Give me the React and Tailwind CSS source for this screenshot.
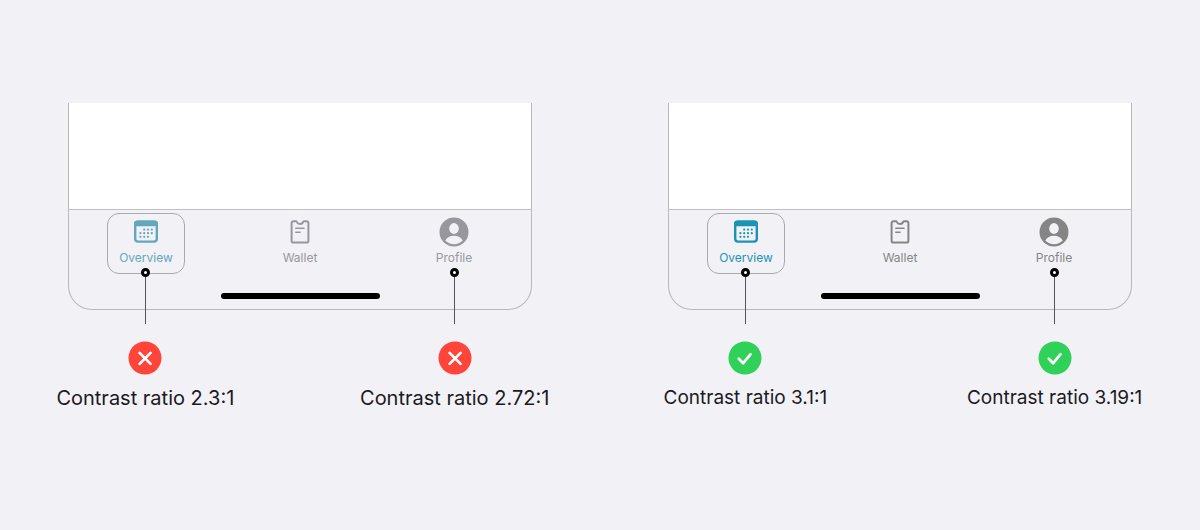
import clsx from 'clsx';

const CalendarIcon = () => (
  <svg width="24" height="24" viewBox="0 0 24 24" fill="none" aria-hidden="true">
    <rect x="1.2" y="1.600" width="21.600" height="20" rx="2.800" stroke="currentColor" strokeWidth="2.400" />
    <path d="M0 6.300V3.600A3.300 3.300 0 0 1 3.300.400h17.400A3.300 3.300 0 0 1 24 3.600v2.700z" fill="currentColor" />
    <g fill="currentColor">
      <circle cx="10.200" cy="9.600" r="1.100" />
      <circle cx="14" cy="9.600" r="1.100" />
      <circle cx="17.800" cy="9.600" r="1.100" />
      <circle cx="6.400" cy="13.200" r="1.100" />
      <circle cx="10.200" cy="13.200" r="1.100" />
      <circle cx="14" cy="13.200" r="1.100" />
      <circle cx="17.800" cy="13.200" r="1.100" />
      <circle cx="6.400" cy="16.800" r="1.100" />
      <circle cx="10.200" cy="16.800" r="1.100" />
      <circle cx="14" cy="16.800" r="1.100" />
    </g>
  </svg>
);

const WalletIcon = () => (
  <svg width="20" height="24" viewBox="0 0 20 24" fill="none" stroke="currentColor" aria-hidden="true">
    <path
      d="M3.500 1.200h2.300c.5 0 .8.300 1 .800.500 1.200 1.700 1.900 3.200 1.900s2.700-.700 3.200-1.900c.2-.5.500-.8 1-.8h2.300a1.900 1.900 0 0 1 1.900 1.900v17.600a1.900 1.900 0 0 1-1.900 1.900h-13a1.900 1.900 0 0 1-1.900-1.900V3.100a1.900 1.900 0 0 1 1.900-1.900z"
      strokeWidth="2"
      strokeLinejoin="round"
    />
    <path d="M5.800 8.300h8.200M5.800 12.200h4.200" strokeWidth="1.500" strokeLinecap="round" />
  </svg>
);

const ProfileIcon = () => (
  <svg width="30" height="30" viewBox="0 0 30 30" fill="none" aria-hidden="true">
    <circle cx="15" cy="15" r="14.500" fill="currentColor" />
    <ellipse cx="15" cy="11.500" rx="4.800" ry="5.400" fill="#f2f1f6" />
    <path d="M6.300 23.600c1.500-3.200 4.800-4.900 8.700-4.900s7.200 1.700 8.700 4.900a12.300 12.300 0 0 1-17.400 0z" fill="#f2f1f6" />
  </svg>
);

const StatusIcon = ({ passed }) => (
  <svg
    width="34"
    height="34"
    viewBox="0 0 34 34"
    fill="none"
    role="img"
    aria-label={passed ? 'Passes' : 'Fails'}
  >
    <circle cx="17" cy="17" r="16.500" fill={passed ? '#30d158' : '#ff453a'} />
    <path
      d={passed ? 'M10.800 17.800l4.400 4.400 7.400-9' : 'M11.600 11.900l11 11M22.600 11.900l-11 11'}
      stroke="#fff"
      strokeWidth="2.700"
      strokeLinecap="round"
      strokeLinejoin="round"
    />
  </svg>
);

const tabs = [
  { label: 'Overview', Icon: CalendarIcon },
  { label: 'Wallet', Icon: WalletIcon },
  { label: 'Profile', Icon: ProfileIcon },
];

const panels = [
  {
    name: 'Low contrast',
    passed: false,
    active: 'text-[#62a8bd]',
    inactive: 'text-[#98979d]',
    captionSize: 'text-[20px]',
    ratios: ['2.3:1', '2.72:1'],
  },
  {
    name: 'Sufficient contrast',
    passed: true,
    active: 'text-[#1b93b5]',
    inactive: 'text-[#858585]',
    captionSize: 'text-[19px]',
    ratios: ['3.1:1', '3.19:1'],
  },
];

const Callout = ({ ratio, passed, captionSize }) => (
  <figure className="flex flex-col items-center">
    <span className="size-[9px] rounded-full border-3 border-black bg-white"></span>
    <span className="h-[47px] w-px bg-[#55555a]"></span>
    <div className="mt-[17px]">
      <StatusIcon passed={passed} />
    </div>
    <figcaption className={clsx('mt-[9px] leading-[28px] whitespace-nowrap text-[#1b1a1f]', captionSize)}>
      Contrast ratio {ratio}
    </figcaption>
  </figure>
);

const TabBar = ({ active, inactive }) => (
  <nav className="grid grid-cols-3 justify-items-center pt-[3px]">
    {tabs.map(({ label, Icon }, index) => (
      <button
        key={label}
        type="button"
        aria-current={index === 0 ? 'page' : undefined}
        className={clsx(
          'flex h-[61px] w-[78px] flex-col items-center rounded-xl border pt-[3px] text-[12px] leading-[16px]',
          index === 0 ? 'border-[#aaa9ae]' : 'border-transparent',
          index === 0 ? active : inactive
        )}
      >
        <span className="flex h-[30px] items-center">
          <Icon />
        </span>
        <span className="mt-[3px]">{label}</span>
      </button>
    ))}
  </nav>
);

const Panel = ({ name, passed, active, inactive, captionSize, ratios }) => (
  <section aria-label={name} className="px-[68px]">
    <div className="rounded-b-3xl border border-t-0 border-[#b9b8bd]">
      <div className="h-[107px] border-b border-[#c0bfc4] bg-white"></div>
      <TabBar active={active} inactive={inactive} />
      <div className="flex justify-center pt-[19px] pb-[10px]">
        <div className="h-[6px] w-[159px] rounded-full bg-black"></div>
      </div>
    </div>

    {/* Pointers start inside the phone frame */}
    <div className="relative -mt-[42px] grid grid-cols-3">
      <Callout ratio={ratios[0]} passed={passed} captionSize={captionSize} />
      <div></div>
      <Callout ratio={ratios[1]} passed={passed} captionSize={captionSize} />
    </div>
  </section>
);

const App = () => {
  return (
    <main className="grid min-h-screen grid-cols-2 items-start bg-[#f2f1f6] pt-[103px] font-['Inter',sans-serif]">
      {panels.map((panel) => (
        <Panel key={panel.name} {...panel} />
      ))}
    </main>
  );
};

export default App;
